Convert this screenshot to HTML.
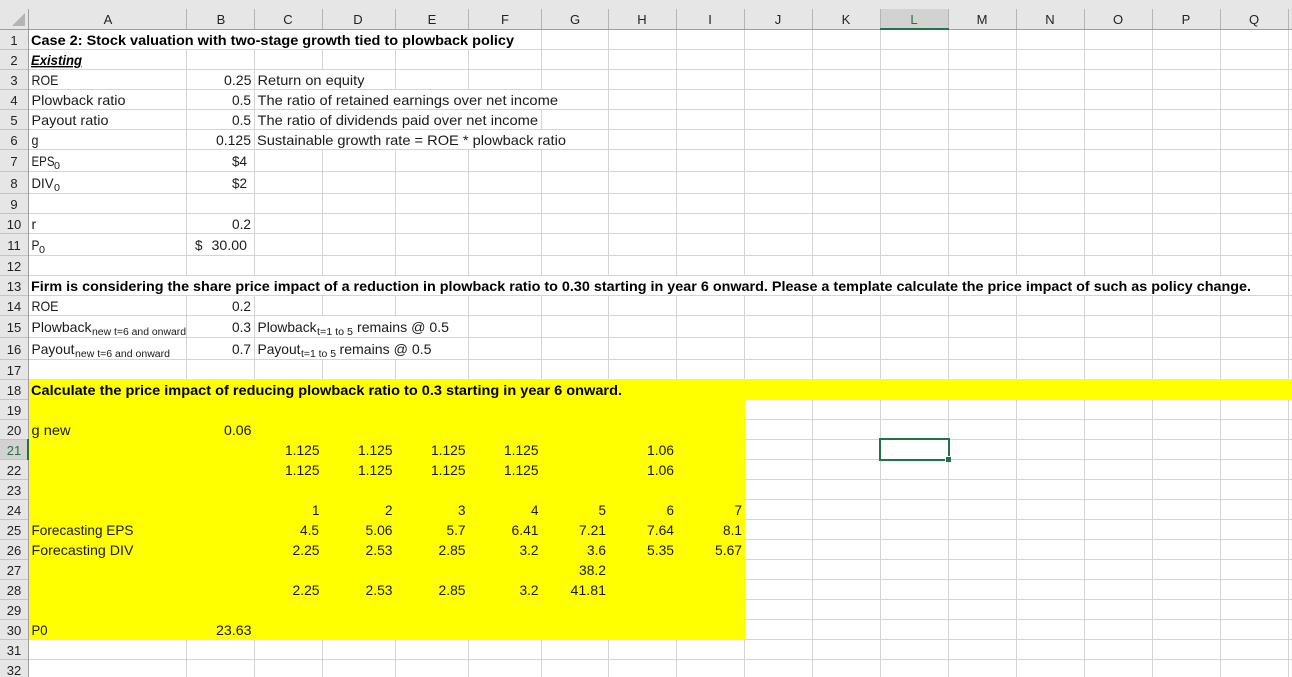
<!DOCTYPE html>
<html><head><meta charset="utf-8"><style>
html,body{margin:0;padding:0;background:#fff;overflow:hidden}
svg{display:block}
text{font-family:"Liberation Sans",sans-serif;font-size:14px;fill:#1a1a1a}
.b{font-weight:bold;fill:#000}
.s{font-size:10px}
.h{font-size:13px;fill:#222;text-anchor:middle}
.r{text-anchor:end}
</style></head><body>
<svg width="1292" height="677" viewBox="0 0 1292 677" xmlns="http://www.w3.org/2000/svg" shape-rendering="crispEdges">
<rect width="1292" height="677" fill="#fff"/>
<!-- grid horizontal -->
<g fill="#d4d4d4">
<rect x="29" y="49" width="1263" height="1"/><rect x="29" y="69" width="1263" height="1"/><rect x="29" y="89" width="1263" height="1"/><rect x="29" y="109" width="1263" height="1"/><rect x="29" y="129" width="1263" height="1"/><rect x="29" y="149" width="1263" height="1"/><rect x="29" y="171" width="1263" height="1"/><rect x="29" y="193" width="1263" height="1"/><rect x="29" y="213" width="1263" height="1"/><rect x="29" y="233" width="1263" height="1"/><rect x="29" y="255" width="1263" height="1"/><rect x="29" y="275" width="1263" height="1"/><rect x="29" y="295" width="1263" height="1"/><rect x="29" y="315" width="1263" height="1"/><rect x="29" y="337" width="1263" height="1"/><rect x="29" y="359" width="1263" height="1"/>
<rect x="29" y="419" width="1263" height="1"/><rect x="29" y="439" width="1263" height="1"/><rect x="29" y="459" width="1263" height="1"/><rect x="29" y="479" width="1263" height="1"/><rect x="29" y="499" width="1263" height="1"/><rect x="29" y="519" width="1263" height="1"/><rect x="29" y="539" width="1263" height="1"/><rect x="29" y="559" width="1263" height="1"/><rect x="29" y="579" width="1263" height="1"/><rect x="29" y="599" width="1263" height="1"/><rect x="29" y="619" width="1263" height="1"/><rect x="29" y="639" width="1263" height="1"/><rect x="29" y="659" width="1263" height="1"/>
<!-- grid vertical -->
<rect x="186" y="30" width="1" height="647"/><rect x="254" y="30" width="1" height="647"/><rect x="322" y="30" width="1" height="647"/><rect x="395" y="30" width="1" height="647"/><rect x="468" y="30" width="1" height="647"/><rect x="541" y="30" width="1" height="647"/><rect x="608" y="30" width="1" height="647"/><rect x="676" y="30" width="1" height="647"/><rect x="744" y="30" width="1" height="647"/><rect x="812" y="30" width="1" height="647"/><rect x="880" y="30" width="1" height="647"/><rect x="948" y="30" width="1" height="647"/><rect x="1016" y="30" width="1" height="647"/><rect x="1084" y="30" width="1" height="647"/><rect x="1152" y="30" width="1" height="647"/><rect x="1220" y="30" width="1" height="647"/><rect x="1288" y="30" width="1" height="647"/>
</g>
<!-- text overflow masks -->
<rect x="29" y="30" width="512" height="19" fill="#fff"/>
<rect x="29" y="276" width="1230" height="19" fill="#fff"/>
<rect x="255" y="70" width="120" height="19" fill="#fff"/>
<rect x="255" y="90" width="311" height="19" fill="#fff"/>
<rect x="255" y="110" width="286" height="19" fill="#fff"/>
<rect x="255" y="130" width="311" height="19" fill="#fff"/>
<rect x="255" y="316" width="195" height="21" fill="#fff"/>
<rect x="255" y="338" width="178" height="21" fill="#fff"/>
<!-- yellow -->
<rect x="29" y="379" width="1263" height="21" fill="#ffff00"/>
<rect x="29" y="400" width="716" height="240" fill="#ffff00"/>
<!-- header -->
<rect x="0" y="0" width="1292" height="29" fill="#e6e6e6"/>
<rect x="0" y="29" width="29" height="648" fill="#e6e6e6"/>
<rect x="881" y="9" width="67" height="20" fill="#d2d2d2"/>
<rect x="0" y="440" width="28" height="19" fill="#d2d2d2"/>
<g fill="#b4b4b4">
<rect x="186" y="9" width="1" height="20"/><rect x="254" y="9" width="1" height="20"/><rect x="322" y="9" width="1" height="20"/><rect x="395" y="9" width="1" height="20"/><rect x="468" y="9" width="1" height="20"/><rect x="541" y="9" width="1" height="20"/><rect x="608" y="9" width="1" height="20"/><rect x="676" y="9" width="1" height="20"/><rect x="744" y="9" width="1" height="20"/><rect x="812" y="9" width="1" height="20"/><rect x="880" y="9" width="1" height="20"/><rect x="948" y="9" width="1" height="20"/><rect x="1016" y="9" width="1" height="20"/><rect x="1084" y="9" width="1" height="20"/><rect x="1152" y="9" width="1" height="20"/><rect x="1220" y="9" width="1" height="20"/><rect x="1288" y="9" width="1" height="20"/>
</g>
<g fill="#c4c4c4">
<rect x="0" y="49" width="28" height="1"/><rect x="0" y="69" width="28" height="1"/><rect x="0" y="89" width="28" height="1"/><rect x="0" y="109" width="28" height="1"/><rect x="0" y="129" width="28" height="1"/><rect x="0" y="149" width="28" height="1"/><rect x="0" y="171" width="28" height="1"/><rect x="0" y="193" width="28" height="1"/><rect x="0" y="213" width="28" height="1"/><rect x="0" y="233" width="28" height="1"/><rect x="0" y="255" width="28" height="1"/><rect x="0" y="275" width="28" height="1"/><rect x="0" y="295" width="28" height="1"/><rect x="0" y="315" width="28" height="1"/><rect x="0" y="337" width="28" height="1"/><rect x="0" y="359" width="28" height="1"/><rect x="0" y="379" width="28" height="1"/><rect x="0" y="399" width="28" height="1"/><rect x="0" y="419" width="28" height="1"/><rect x="0" y="439" width="28" height="1"/><rect x="0" y="459" width="28" height="1"/><rect x="0" y="479" width="28" height="1"/><rect x="0" y="499" width="28" height="1"/><rect x="0" y="519" width="28" height="1"/><rect x="0" y="539" width="28" height="1"/><rect x="0" y="559" width="28" height="1"/><rect x="0" y="579" width="28" height="1"/><rect x="0" y="599" width="28" height="1"/><rect x="0" y="619" width="28" height="1"/><rect x="0" y="639" width="28" height="1"/><rect x="0" y="659" width="28" height="1"/>
</g>
<rect x="0" y="29" width="1292" height="1" fill="#9e9e9e"/>
<rect x="28" y="9" width="1" height="668" fill="#9e9e9e"/>
<polygon points="12,26 25,26 25,13" fill="#b4b4b4" shape-rendering="auto"/>
<rect x="880" y="28" width="69" height="2" fill="#217346"/>
<rect x="27" y="439" width="2" height="21" fill="#217346"/>
<!-- column letters -->
<text class="h" x="108" y="24">A</text><text class="h" x="221" y="24">B</text><text class="h" x="288" y="24">C</text><text class="h" x="358" y="24">D</text><text class="h" x="432" y="24">E</text><text class="h" x="505" y="24">F</text><text class="h" x="575" y="24">G</text><text class="h" x="642" y="24">H</text><text class="h" x="710" y="24">I</text><text class="h" x="778" y="24">J</text><text class="h" x="846" y="24">K</text><text class="h" x="914" y="24" style="fill:#217346">L</text><text class="h" x="982" y="24">M</text><text class="h" x="1050" y="24">N</text><text class="h" x="1118" y="24">O</text><text class="h" x="1186" y="24">P</text><text class="h" x="1254" y="24">Q</text>
<!-- row numbers -->
<text class="h" x="14" y="45">1</text><text class="h" x="14" y="65">2</text><text class="h" x="14" y="85">3</text><text class="h" x="14" y="105">4</text><text class="h" x="14" y="125">5</text><text class="h" x="14" y="145">6</text><text class="h" x="14" y="166">7</text><text class="h" x="14" y="188">8</text><text class="h" x="14" y="209">9</text>
<text class="h" x="14" y="229">10</text><text class="h" x="14" y="250">11</text><text class="h" x="14" y="271">12</text><text class="h" x="14" y="291">13</text><text class="h" x="14" y="311">14</text><text class="h" x="14" y="332">15</text><text class="h" x="14" y="354">16</text><text class="h" x="14" y="375">17</text><text class="h" x="14" y="395">18</text><text class="h" x="14" y="415">19</text><text class="h" x="14" y="435">20</text><text class="h" x="14" y="455" style="fill:#217346">21</text><text class="h" x="14" y="475">22</text><text class="h" x="14" y="495">23</text><text class="h" x="14" y="515">24</text><text class="h" x="14" y="535">25</text><text class="h" x="14" y="555">26</text><text class="h" x="14" y="575">27</text><text class="h" x="14" y="595">28</text><text class="h" x="14" y="615">29</text><text class="h" x="14" y="635">30</text><text class="h" x="14" y="655">31</text><text class="h" x="14" y="675">32</text>
<g shape-rendering="auto">
<text class="b" x="31" y="45" textLength="483" lengthAdjust="spacingAndGlyphs">Case 2: Stock valuation with two-stage growth tied to plowback policy</text>
<text class="b" x="31" y="65" textLength="51" lengthAdjust="spacingAndGlyphs" font-style="italic" text-decoration="underline">Existing</text>
<text x="31.5" y="85" textLength="27" lengthAdjust="spacingAndGlyphs">ROE</text>
<text x="31.5" y="105" textLength="94" lengthAdjust="spacingAndGlyphs">Plowback ratio</text>
<text x="31.5" y="125" textLength="77" lengthAdjust="spacingAndGlyphs">Payout ratio</text>
<text x="31.5" y="145" textLength="7" lengthAdjust="spacingAndGlyphs">g</text>
<text x="31.5" y="166" textLength="23" lengthAdjust="spacingAndGlyphs">EPS</text><text class="s" x="54" y="169" textLength="6" lengthAdjust="spacingAndGlyphs">0</text>
<text x="31.5" y="188" textLength="22" lengthAdjust="spacingAndGlyphs">DIV</text><text class="s" x="54" y="191" textLength="6" lengthAdjust="spacingAndGlyphs">0</text>
<text x="31.5" y="229">r</text>
<text x="31.5" y="250" textLength="8" lengthAdjust="spacingAndGlyphs">P</text><text class="s" x="39" y="253" textLength="6" lengthAdjust="spacingAndGlyphs">0</text>
<text class="b" x="31" y="291" textLength="1220" lengthAdjust="spacingAndGlyphs">Firm is considering the share price impact of a reduction in plowback ratio to 0.30 starting in year 6 onward. Please a template calculate the price impact of such as policy change.</text>
<text x="31.5" y="311" textLength="27" lengthAdjust="spacingAndGlyphs">ROE</text>
<text x="31.5" y="332" textLength="60" lengthAdjust="spacingAndGlyphs">Plowback</text><text class="s" x="92" y="335" textLength="94" lengthAdjust="spacingAndGlyphs">new t=6 and onward</text>
<text x="31.5" y="354" textLength="43" lengthAdjust="spacingAndGlyphs">Payout</text><text class="s" x="75" y="357" textLength="95" lengthAdjust="spacingAndGlyphs">new t=6 and onward</text>
<text class="b" x="31" y="395" textLength="591" lengthAdjust="spacingAndGlyphs">Calculate the price impact of reducing plowback ratio to 0.3 starting in year 6 onward.</text>
<text x="31.5" y="435" textLength="39" lengthAdjust="spacingAndGlyphs">g new</text>
<text x="31.5" y="535" textLength="102" lengthAdjust="spacingAndGlyphs">Forecasting EPS</text>
<text x="31.5" y="555" textLength="102" lengthAdjust="spacingAndGlyphs">Forecasting DIV</text>
<text x="31.5" y="635" textLength="16" lengthAdjust="spacingAndGlyphs">P0</text>
<!-- col B -->
<text x="224" y="85" textLength="27.5" lengthAdjust="spacingAndGlyphs">0.25</text>
<text x="232" y="105" textLength="19" lengthAdjust="spacingAndGlyphs">0.5</text>
<text x="232" y="125" textLength="19" lengthAdjust="spacingAndGlyphs">0.5</text>
<text x="216" y="145" textLength="35" lengthAdjust="spacingAndGlyphs">0.125</text>
<text x="232" y="166" textLength="15" lengthAdjust="spacingAndGlyphs">$4</text>
<text x="232" y="188" textLength="15" lengthAdjust="spacingAndGlyphs">$2</text>
<text x="232" y="229" textLength="19" lengthAdjust="spacingAndGlyphs">0.2</text>
<text x="195" y="250" textLength="7.5" lengthAdjust="spacingAndGlyphs">$</text>
<text x="211.5" y="250" textLength="35.5" lengthAdjust="spacingAndGlyphs">30.00</text>
<text x="232" y="311" textLength="19" lengthAdjust="spacingAndGlyphs">0.2</text>
<text x="232" y="332" textLength="19" lengthAdjust="spacingAndGlyphs">0.3</text>
<text x="232" y="354" textLength="19" lengthAdjust="spacingAndGlyphs">0.7</text>
<text x="224" y="435" textLength="27.5" lengthAdjust="spacingAndGlyphs">0.06</text>
<text x="216" y="635" textLength="35.5" lengthAdjust="spacingAndGlyphs">23.63</text>
<!-- col C notes -->
<text x="257.5" y="85" textLength="107" lengthAdjust="spacingAndGlyphs">Return on equity</text>
<text x="257.5" y="105" textLength="300.5" lengthAdjust="spacingAndGlyphs">The ratio of retained earnings over net income</text>
<text x="257.5" y="125" textLength="280.5" lengthAdjust="spacingAndGlyphs">The ratio of dividends paid over net income</text>
<text x="257" y="145" textLength="309" lengthAdjust="spacingAndGlyphs">Sustainable growth rate = ROE * plowback ratio</text>
<text x="257.5" y="332" textLength="59" lengthAdjust="spacingAndGlyphs">Plowback</text><text class="s" x="317" y="335" textLength="36" lengthAdjust="spacingAndGlyphs">t=1 to 5</text><text x="357" y="332" textLength="92" lengthAdjust="spacingAndGlyphs">remains @ 0.5</text>
<text x="257.5" y="354" textLength="43" lengthAdjust="spacingAndGlyphs">Payout</text><text class="s" x="301" y="357" textLength="35" lengthAdjust="spacingAndGlyphs">t=1 to 5</text><text x="339.5" y="354" textLength="92" lengthAdjust="spacingAndGlyphs">remains @ 0.5</text>
<!-- data rows 21, 22 -->
<text x="285" y="455" textLength="34.5" lengthAdjust="spacingAndGlyphs">1.125</text><text x="358" y="455" textLength="34.5" lengthAdjust="spacingAndGlyphs">1.125</text><text x="431" y="455" textLength="34.5" lengthAdjust="spacingAndGlyphs">1.125</text><text x="504" y="455" textLength="34.5" lengthAdjust="spacingAndGlyphs">1.125</text><text x="647" y="455" textLength="27" lengthAdjust="spacingAndGlyphs">1.06</text>
<text x="285" y="475" textLength="34.5" lengthAdjust="spacingAndGlyphs">1.125</text><text x="358" y="475" textLength="34.5" lengthAdjust="spacingAndGlyphs">1.125</text><text x="431" y="475" textLength="34.5" lengthAdjust="spacingAndGlyphs">1.125</text><text x="504" y="475" textLength="34.5" lengthAdjust="spacingAndGlyphs">1.125</text><text x="647" y="475" textLength="27" lengthAdjust="spacingAndGlyphs">1.06</text>
<!-- row 24 -->
<text x="312" y="515" textLength="7.5" lengthAdjust="spacingAndGlyphs">1</text><text x="385" y="515" textLength="7.5" lengthAdjust="spacingAndGlyphs">2</text><text x="458" y="515" textLength="7.5" lengthAdjust="spacingAndGlyphs">3</text><text x="531" y="515" textLength="7.5" lengthAdjust="spacingAndGlyphs">4</text><text x="598.5" y="515" textLength="7.5" lengthAdjust="spacingAndGlyphs">5</text><text x="666.5" y="515" textLength="7.5" lengthAdjust="spacingAndGlyphs">6</text><text x="734.5" y="515" textLength="7.5" lengthAdjust="spacingAndGlyphs">7</text>
<!-- row 25 -->
<text x="300" y="535" textLength="19" lengthAdjust="spacingAndGlyphs">4.5</text><text x="365.5" y="535" textLength="27" lengthAdjust="spacingAndGlyphs">5.06</text><text x="446.5" y="535" textLength="19" lengthAdjust="spacingAndGlyphs">5.7</text><text x="511.5" y="535" textLength="27" lengthAdjust="spacingAndGlyphs">6.41</text><text x="579" y="535" textLength="27" lengthAdjust="spacingAndGlyphs">7.21</text><text x="647" y="535" textLength="27" lengthAdjust="spacingAndGlyphs">7.64</text><text x="723" y="535" textLength="19" lengthAdjust="spacingAndGlyphs">8.1</text>
<!-- row 26 -->
<text x="292.5" y="555" textLength="27" lengthAdjust="spacingAndGlyphs">2.25</text><text x="365.5" y="555" textLength="27" lengthAdjust="spacingAndGlyphs">2.53</text><text x="438.5" y="555" textLength="27" lengthAdjust="spacingAndGlyphs">2.85</text><text x="519.5" y="555" textLength="19" lengthAdjust="spacingAndGlyphs">3.2</text><text x="587" y="555" textLength="19" lengthAdjust="spacingAndGlyphs">3.6</text><text x="647" y="555" textLength="27" lengthAdjust="spacingAndGlyphs">5.35</text><text x="715" y="555" textLength="27" lengthAdjust="spacingAndGlyphs">5.67</text>
<!-- row 27 -->
<text x="579" y="575" textLength="27" lengthAdjust="spacingAndGlyphs">38.2</text>
<!-- row 28 -->
<text x="292.5" y="595" textLength="27" lengthAdjust="spacingAndGlyphs">2.25</text><text x="365.5" y="595" textLength="27" lengthAdjust="spacingAndGlyphs">2.53</text><text x="438.5" y="595" textLength="27" lengthAdjust="spacingAndGlyphs">2.85</text><text x="519.5" y="595" textLength="19" lengthAdjust="spacingAndGlyphs">3.2</text><text x="570.5" y="595" textLength="35.5" lengthAdjust="spacingAndGlyphs">41.81</text>
</g>
<!-- selection -->
<rect x="880" y="439" width="69" height="21" fill="none" stroke="#217346" stroke-width="2"/>
<rect x="945" y="456" width="1" height="6" fill="#fff"/>
<rect x="945" y="456" width="6" height="1" fill="#fff"/>
<rect x="946" y="457" width="5" height="5" fill="#217346"/>
</svg>
</body></html>
